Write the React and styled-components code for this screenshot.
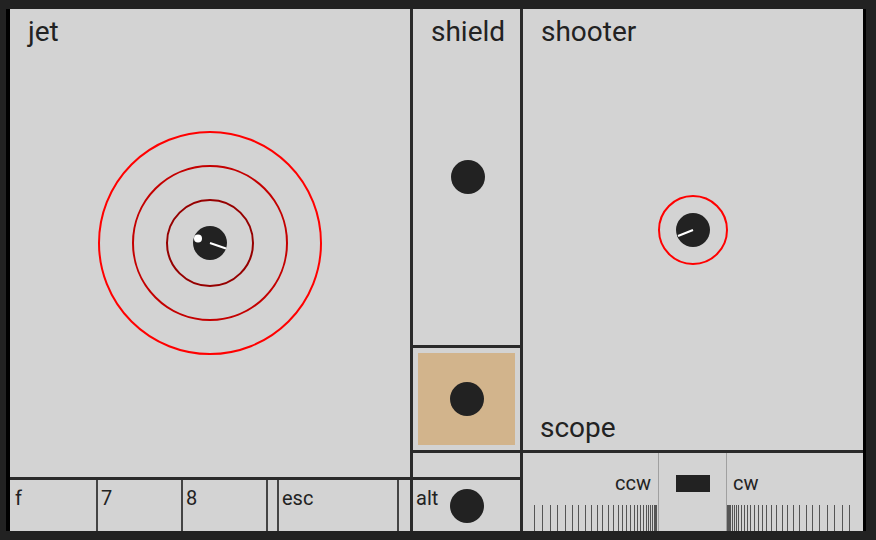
import React from "react";
import styled, { createGlobalStyle } from "styled-components";

const Global = createGlobalStyle`
  html, body { margin: 0; padding: 0; background: #222; }
  body { font-family: Roboto, "Noto Sans", sans-serif; color: #222; }
  * { box-sizing: border-box; }
`;

const Frame = styled.div`
  box-sizing: content-box;
  margin: 9px 0 0 6px;
  width: 853px;
  height: 522px;
  border-left: 4px solid #000;
  border-right: 3px solid #000;
  overflow: hidden;
  display: grid;
  grid-template-columns: 400px 107px 340px;
  column-gap: 3px;
  background: #2a2a2a;
`;

const Column = styled.div`
  display: flex;
  flex-direction: column;
  gap: 3px;
  min-height: 0;
`;

const Panel = styled.section`
  display: grid;
  height: ${(p) => p.$h}px;
  flex: none;
  background: ${(p) => p.$bg || "#d3d3d3"};
  padding: ${(p) => p.$pad || "0"};
  & > * { grid-area: 1 / 1; }
`;

const Inset = styled.div`
  background: #d2b48c;
  display: grid;
  place-items: center;
`;

const Title = styled.div`
  font-size: 28px;
  padding: ${(p) => (p.$bottom ? "0 17px 6px 17px" : "6px 17px 0 18px")};
  align-self: ${(p) => (p.$bottom ? "end" : "start")};
  justify-self: start;
  line-height: normal;
`;

const Center = styled.div`
  place-self: center;
  display: flex;
`;

const Dot = styled.div`
  width: 34px;
  height: 34px;
  border-radius: 50%;
  background: #222;
`;

const Keys = styled.div`
  height: 51px;
  flex: none;
  display: grid;
  grid-template-columns: 86px 83px 83px 9px 118px 11px;
  column-gap: 2px;
  background: #444;
`;

const Key = styled.div`
  background: #d3d3d3;
  font-size: 20px;
  padding: 6px 0 0 ${(p) => p.$pl || 3}px;
  line-height: normal;
`;

const SmallLabel = styled.div`
  font-size: 20px;
  padding: 6px 0 0 3px;
  align-self: start;
  justify-self: start;
  line-height: normal;
`;

const DialRow = styled.div`
  height: 78px;
  flex: none;
  display: grid;
  grid-template-columns: 135px 67px 136px;
  column-gap: 1px;
  background: #a0a0a0;
`;

const DialCell = styled.div`
  background: #d3d3d3;
  display: flex;
  flex-direction: column;
  align-items: ${(p) => (p.$side === "left" ? "flex-end" : "flex-start")};
`;

const DialLabel = styled.div`
  font-size: 20px;
  line-height: normal;
  margin-top: 18px;
  padding: ${(p) => (p.$side === "left" ? "0 7px 0 0" : "0 0 0 6px")};
`;

const MidCell = styled.div`
  background: #d3d3d3;
  display: flex;
  justify-content: center;
`;

const Slider = styled.div`
  width: 34px;
  height: 17px;
  margin-top: 22px;
  background: #222;
`;

const TickBox = styled.svg`
  margin-top: auto;
  display: block;
`;

function Ticks({ side }) {
  const W = 123;
  const N = 30;
  const xs = [];
  for (let k = 0; k <= N; k++) {
    const d = W * (k / N) * (k / N);
    const x = side === "left" ? W - d : d;
    xs.push(Math.min(W - 0.5, Math.max(0.5, Math.round(x) + 0.5)));
  }
  return (
    <TickBox width={W + 1} height={26} viewBox={`0 0 ${W + 1} 26`}>
      {xs.map((x, i) => (
        <line key={i} x1={x} y1={0} x2={x} y2={26} stroke="#555" strokeWidth="1" shapeRendering="crispEdges" />
      ))}
    </TickBox>
  );
}

function JetTarget() {
  const c = 115;
  return (
    <svg width="230" height="230" viewBox="0 0 230 230">
      <circle cx={c} cy={c} r="111" fill="none" stroke="#ff0000" strokeWidth="2" />
      <circle cx={c} cy={c} r="77" fill="none" stroke="#c40000" strokeWidth="2" />
      <circle cx={c} cy={c} r="43" fill="none" stroke="#960000" strokeWidth="2" />
      <circle cx={c} cy={c} r="17" fill="#222" />
      <circle cx={c - 12} cy={c - 4.5} r="4" fill="#fff" />
      <line x1={c} y1={c} x2={c + 16} y2={c + 5.5} stroke="#fff" strokeWidth="2" />
    </svg>
  );
}

function ShooterTarget() {
  const c = 37;
  return (
    <svg width="74" height="74" viewBox="0 0 74 74">
      <circle cx={c} cy={c} r="34" fill="none" stroke="#ff0000" strokeWidth="2" />
      <circle cx={c} cy={c} r="17" fill="#222" />
      <line x1={c} y1={c} x2={c - 15} y2={c + 6} stroke="#fff" strokeWidth="2" />
    </svg>
  );
}

export default function App() {
  return (
    <>
      <Global />
      <Frame>
        <Column>
          <Panel $h={468}>
            <Title>jet</Title>
            <Center>
              <JetTarget />
            </Center>
          </Panel>
          <Keys>
            <Key $pl={5}>f</Key>
            <Key>7</Key>
            <Key>8</Key>
            <Key />
            <Key>esc</Key>
            <Key />
          </Keys>
        </Column>
        <Column>
          <Panel $h={336}>
            <Title>shield</Title>
            <Center>
              <Dot />
            </Center>
          </Panel>
          <Panel $h={102} $pad="5px">
            <Inset>
              <Dot />
            </Inset>
          </Panel>
          <Panel $h={24} />
          <Panel $h={51}>
            <SmallLabel>alt</SmallLabel>
            <Center>
              <Dot />
            </Center>
          </Panel>
        </Column>
        <Column>
          <Panel $h={441}>
            <Title>shooter</Title>
            <Center>
              <ShooterTarget />
            </Center>
            <Title $bottom>scope</Title>
          </Panel>
          <DialRow>
            <DialCell $side="left">
              <DialLabel $side="left">ccw</DialLabel>
              <Ticks side="left" />
            </DialCell>
            <MidCell>
              <Slider />
            </MidCell>
            <DialCell $side="right">
              <DialLabel $side="right">cw</DialLabel>
              <Ticks side="right" />
            </DialCell>
          </DialRow>
        </Column>
      </Frame>
    </>
  );
}
